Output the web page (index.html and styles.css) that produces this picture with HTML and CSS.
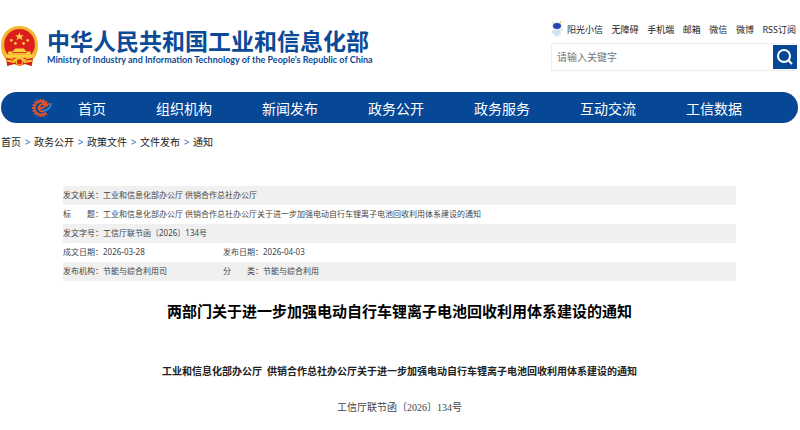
FILE: index.html
```html
<!DOCTYPE html>
<html lang="zh-CN">
<head>
    <meta charset="UTF-8">
    <meta name="viewport" content="width=device-width, initial-scale=1.0">
    <title>两部门关于进一步加强电动自行车锂离子电池回收利用体系建设的通知</title>
    <link rel="stylesheet" href="styles.css">
</head>
<body>
    <header class="header">
        <a class="logo" href="#">
            <svg class="emblem" viewBox="0 0 38 42" aria-hidden="true">
                <path fill="#f2b632" d="M19 1C8 1 1 9 1 20c0 6 2 11 5 14l1 6 7-2 5 2 5-2 7 2 1-6c3-3 5-8 5-14C37 9 30 1 19 1z"/>
                <path fill="#d9201d" d="M6 32l7 2 6 4 6-4 7-2-1 8-7-2-5 2-5-2-7 2z"/>
                <circle cx="19" cy="19" r="15" fill="#dc1f1c"/>
                <path fill="#f9d43c" d="M19 7l1 3h3l-2 2 1 3-3-2-3 2 1-3-2-2h3z"/>
                <g fill="#f9d43c">
                    <circle cx="11" cy="15" r="1.3"/>
                    <circle cx="27" cy="15" r="1.3"/>
                    <circle cx="15" cy="18" r="1.3"/>
                    <circle cx="23" cy="18" r="1.3"/>
                    <path d="M13 25l2-2h8l2 2v1h5v3H8v-3h5z"/>
                    <path d="M5 29h28l-2 3H7z"/>
                </g>
                <path fill="none" stroke="#f6c838" stroke-width="2" d="M7 35l7 1c1-3 3-4 5-4s4 1 5 4l7-1"/>
                <circle cx="19" cy="36" r="3" fill="#dc1f1c" stroke="#f6c838"/>
                <path stroke="#dc1f1c" d="M12 27h14"/>
            </svg>
            <span class="logo-text">
                <span class="logo-cn">中华人民共和国工业和信息化部</span>
                <span class="logo-en" lang="en">Ministry of Industry and Information Technology of the People’s Republic of China</span>
            </span>
        </a>
        <div class="tools">
            <nav class="top-links" aria-label="快捷链接">
                <a class="robot-link" href="#">
                    <svg class="robot" viewBox="0 0 12 18" aria-hidden="true">
                        <path d="M2 2l1 2M10 1L9 4" stroke="#f2c24b"/>
                        <ellipse cx="6" cy="6" rx="5" ry="4" fill="#dfe8f6"/>
                        <ellipse cx="6" cy="6" rx="4" ry="3" fill="#2447b5"/>
                        <path d="M3 10h6l1 4-2 1v2H7l-1-2-1 2H4v-2l-2-1z" fill="#d3e0f4"/>
                        <path d="M2 11l-1 2M10 11l1-2" stroke="#aac5eb"/>
                    </svg>阳光小信</a>
                <a href="#">无障碍</a>
                <a href="#">手机端</a>
                <a href="#">邮箱</a>
                <a href="#">微信</a>
                <a href="#">微博</a>
                <a href="#">RSS订阅</a>
            </nav>
            <form class="search">
                <input class="search-input" type="text" placeholder="请输入关键字" aria-label="请输入关键字">
                <button class="search-btn" type="submit" aria-label="搜索">
                    <svg viewBox="0 0 24 24" aria-hidden="true">
                        <circle cx="11" cy="11" r="6" fill="none" stroke="#fff" stroke-width="2"/>
                        <path d="M15 15l4 4" stroke="#fff" stroke-width="2"/>
                    </svg>
                </button>
            </form>
        </div>
    </header>

    <nav class="nav" aria-label="主导航">
        <svg class="nav-icon" viewBox="0 0 20 20" aria-hidden="true">
            <circle cx="9" cy="10" r="8" fill="none" stroke="#e2532a" stroke-width="2" stroke-dasharray="2 1"/>
            <circle cx="9" cy="10" r="6.5" fill="none" stroke="#e2532a" stroke-width="2"/>
            <path fill="#064796" d="M12 11l8-6v9l-5 2z"/>
            <path fill="none" stroke="#e2532a" stroke-width="2" d="M7 10c3 1 6-1 6-3s-5-1-6 2 2 5 5 4"/>
            <path fill="none" stroke="#2c82c8" stroke-width="2" d="M19 5c0 4-3 7-8 8"/>
        </svg>
        <a href="#">首页</a>
        <a href="#">组织机构</a>
        <a href="#">新闻发布</a>
        <a href="#">政务公开</a>
        <a href="#">政务服务</a>
        <a href="#">互动交流</a>
        <a href="#">工信数据</a>
    </nav>

    <nav class="crumbs" aria-label="当前位置">
        <a href="#">首页</a><span>&gt;</span>
        <a href="#">政务公开</a><span>&gt;</span>
        <a href="#">政策文件</a><span>&gt;</span>
        <a href="#">文件发布</a><span>&gt;</span>
        <a href="#">通知</a>
    </nav>

    <main class="main">
        <table class="info">
            <tr>
                <th scope="row">发文机关：</th>
                <td colspan="3">工业和信息化部办公厅 供销合作总社办公厅</td>
            </tr>
            <tr>
                <th scope="row">标　　题：</th>
                <td colspan="3">工业和信息化部办公厅 供销合作总社办公厅关于进一步加强电动自行车锂离子电池回收利用体系建设的通知</td>
            </tr>
            <tr>
                <th scope="row">发文字号：</th>
                <td colspan="3">工信厅联节函〔2026〕134号</td>
            </tr>
            <tr>
                <th scope="row">成文日期：</th>
                <td class="info-half">2026-03-28</td>
                <th scope="row">发布日期：</th>
                <td>2026-04-03</td>
            </tr>
            <tr>
                <th scope="row">发布机构：</th>
                <td class="info-half">节能与综合利用司</td>
                <th scope="row">分　　类：</th>
                <td>节能与综合利用</td>
            </tr>
        </table>

        <h1 class="title">两部门关于进一步加强电动自行车锂离子电池回收利用体系建设的通知</h1>
        <article class="article">
            <h2>工业和信息化部办公厅&nbsp; 供销合作总社办公厅关于进一步加强电动自行车锂离子电池回收利用体系建设的通知</h2>
            <p>工信厅联节函〔2026〕134号</p>
        </article>
    </main>
</body>
</html>
```

FILE: styles.css
```css
* {
    box-sizing: border-box;
}
body {
    margin: 0;
    font-family: "Noto Sans", "Noto Sans CJK SC", sans-serif;
    font-size: 10px;
    color: #222;
    background: #fff;
}
a {
    color: inherit;
    text-decoration: none;
}
.header {
    display: flex;
    justify-content: space-between;
    align-items: flex-start;
    height: 92px;
    padding: 20px 3px 0 0;
}
.logo {
    display: flex;
    align-items: flex-start;
    gap: 8px;
    padding-top: 5px;
    color: #0b4a97;
}
.emblem {
    width: 39px;
    height: 43px;
}
.logo-text {
    display: flex;
    flex-direction: column;
    padding-top: 2px;
}
.logo-cn {
    font-family: "Noto Sans CJK SC", sans-serif;
    font-size: 23px;
    line-height: 26px;
    font-weight: bold;
}
.logo-en {
    font-family: Lato, sans-serif;
    font-size: 9px;
    line-height: 14px;
    font-weight: bold;
}
.tools {
    width: 246px;
}
.top-links {
    display: flex;
    justify-content: space-between;
    align-items: center;
    height: 18px;
    margin-bottom: 5px;
    padding-right: 1px;
    font-size: 9px;
    white-space: nowrap;
}
.robot-link {
    display: flex;
    align-items: center;
    gap: 4px;
}
.robot {
    width: 12px;
    height: 18px;
}
.search {
    display: flex;
    align-items: center;
    height: 28px;
    border: 1px solid #eee;
    border-right: none;
}
.search-input {
    flex: 1;
    min-width: 0;
    height: 26px;
    padding: 0 5px;
    border: none;
    outline: none;
    font-family: inherit;
    font-size: 10px;
}
.search-input::placeholder {
    color: #757575;
}
.search-btn {
    width: 24px;
    height: 24px;
    padding: 0;
    border: none;
    background: #064796;
    cursor: pointer;
}
.search-btn svg {
    display: block;
}
.nav {
    display: flex;
    align-items: center;
    gap: 50px;
    height: 31px;
    margin: 0 2px 0 1px;
    padding-left: 31px;
    border-radius: 16px;
    background: #064796;
    color: #fff;
    font-size: 14px;
    white-space: nowrap;
}
.nav-icon {
    width: 20px;
    height: 20px;
    margin-right: -24px;
}
.crumbs {
    display: flex;
    height: 20px;
    margin: 9px 0 0 1px;
    line-height: 20px;
}
.crumbs span {
    width: 13px;
    text-align: center;
    color: #2f6fb5;
}
.main {
    padding: 34px 64px 0 63px;
}
.info {
    width: 100%;
    border-collapse: collapse;
    font-size: 8px;
    color: #444;
}
.info tr:nth-child(odd) {
    background: #f0f0f0;
}
.info th,
.info td {
    height: 19px;
    padding: 0;
    line-height: 17px;
    font-weight: normal;
    text-align: left;
    vertical-align: top;
}
.info th {
    width: 39px;
    white-space: nowrap;
}
.info .info-half {
    width: 120px;
}
.title {
    margin: 19px 0 0;
    font-size: 15px;
    line-height: 22px;
    text-align: center;
    color: #000;
}
.article {
    font-family: "Liberation Serif", "Noto Sans CJK SC", serif;
    text-align: center;
}
.article h2 {
    margin: 40px 0 0;
    font-size: 10px;
    line-height: 20px;
}
.article p {
    margin: 16px 0 0;
    line-height: 20px;
    color: #444;
}
```
